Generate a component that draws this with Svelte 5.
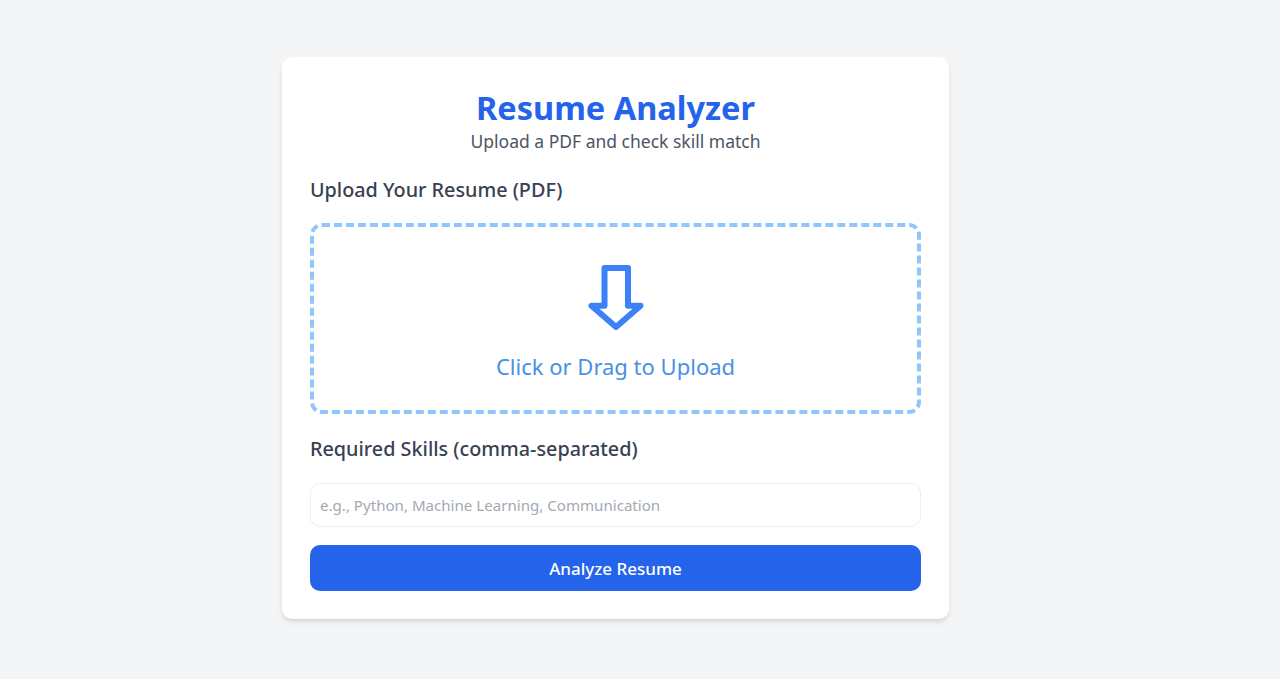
<script>
	let skills = $state('');
</script>

<main class="page">
	<section class="card">
		<header class="head">
			<h1>Resume Analyzer</h1>
			<p>Upload a PDF and check skill match</p>
		</header>

		<label class="label upload-label" for="resume">Upload Your Resume (PDF)</label>
		<label class="drop" for="resume">
			<svg class="icon" viewBox="0 0 64 72" width="64" height="72" aria-hidden="true">
				<path d="M20.500 6 H44 V43.700 H56.500 L32 65 L7.500 43.700 H20.500 Z" />
			</svg>
			<span>Click or Drag to Upload</span>
			<input id="resume" type="file" accept="application/pdf" />
		</label>

		<label class="label skills-label" for="skills">Required Skills (comma-separated)</label>
		<input
			id="skills"
			class="skills"
			type="text"
			placeholder="e.g., Python, Machine Learning, Communication"
			bind:value={skills}
		/>

		<button type="button" class="submit">Analyze Resume</button>
	</section>
</main>

<style>
	:global(body) {
		background: #f4f5f7;
		font-family: 'Noto Sans', 'Open Sans', sans-serif;
	}

	.page {
		min-height: 679px;
		display: flex;
		align-items: center;
		justify-content: center;
		box-sizing: border-box;
		padding: 0 49px 3px 0;
	}

	.card {
		width: 667px;
		height: 562px;
		box-sizing: border-box;
		padding: 28px;
		background: #fff;
		border-radius: 10px;
		box-shadow: 0 4px 6px -1px rgba(0, 0, 0, 0.1), 0 2px 4px -2px rgba(0, 0, 0, 0.1);
		display: flex;
		flex-direction: column;
	}

	.head {
		text-align: center;
	}

	h1 {
		margin: 0;
		font-size: 32.500px;
		line-height: 46px;
		font-weight: 700;
		color: #2563eb;
	}

	.head p {
		margin: -2px 0 0;
		font-size: 17.500px;
		line-height: 24px;
		color: #4b5563;
	}

	.label {
		display: block;
		font-size: 19.800px;
		line-height: 28px;
		font-weight: 500;
		color: #374151;
	}

	.upload-label {
		margin-top: 23px;
		margin-bottom: 19px;
	}

	.drop {
		height: 191px;
		box-sizing: border-box;
		border: 4px dashed #93c5fd;
		border-radius: 12px;
		display: flex;
		flex-direction: column;
		align-items: center;
		color: #4a90e2;
		font-size: 22px;
		line-height: 30px;
		cursor: pointer;
		padding-top: 35px;
	}

	.drop input {
		display: none;
	}

	.icon {
		fill: none;
		stroke: #3b82f6;
		stroke-width: 6;
		stroke-linejoin: round;
		margin-bottom: 17px;
	}

	.skills-label {
		margin-top: 21px;
		margin-bottom: 20px;
	}

	.skills {
		height: 44px;
		box-sizing: border-box;
		border: 1px solid #eceef1;
		border-radius: 10px;
		padding: 0 9px;
		font: inherit;
		font-size: 15.100px;
		color: #374151;
		outline: none;
	}

	.skills::placeholder {
		color: #a3a9b3;
		opacity: 1;
	}

	.submit {
		margin-top: 18px;
		height: 46px;
		border: 0;
		border-radius: 10px;
		background: #2563eb;
		color: #fff;
		font: inherit;
		font-size: 17px;
		font-weight: 500;
		cursor: pointer;
	}
</style>
